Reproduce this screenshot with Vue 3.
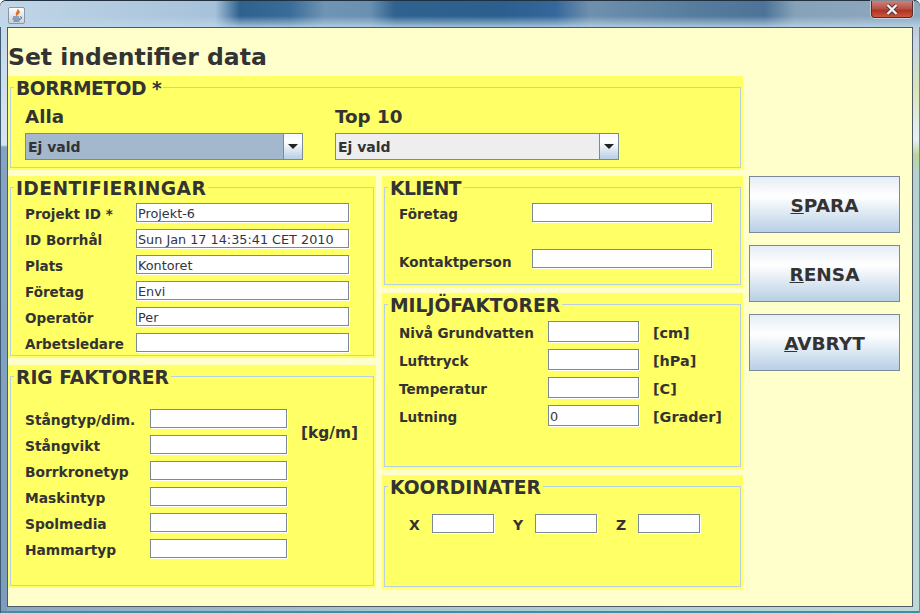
<template>
  <div class="window">
    <div class="titlebar">
      <div class="app-icon">
        <svg width="14" height="14" viewBox="0 0 14 14">
          <path d="M7.500 0.500C9.500 2.500 5 3.500 7 6.500C6.500 4.500 10.500 4 8.500 2" fill="none" stroke="#e8701a" stroke-width="1.600" />
          <path d="M3 8h6M2.500 10h7.500M3.500 12h6" stroke="#3a5c8c" stroke-width="1" fill="none" />
          <path d="M10 7.800c2.300-.5 2 2.200-.5 2.600" stroke="#3a5c8c" stroke-width="1" fill="none" />
        </svg>
      </div>
      <div class="close-btn">
        <svg width="16" height="13" viewBox="0 0 16 13">
          <path d="M3.500 2L12.500 11M12.500 2L3.500 11" stroke="#5b3030" stroke-width="4" />
          <path d="M3.500 2L12.500 11M12.500 2L3.500 11" stroke="#f2f3f5" stroke-width="2.400" />
        </svg>
      </div>
    </div>
    <div class="client">
      <h1 class="heading">Set indentifier data</h1>
      <div class="main">
        <div class="forms">
          <section class="panel method-panel">
            <div class="box">
              <h2 class="legend">BORRMETOD *</h2>
              <div class="method-grid">
                <div v-for="c in combos" :key="c.title" class="method" :class="c.cls">
                  <div class="method-title">{{ c.title }}</div>
                  <div class="combo">
                    <div class="combo-value">Ej vald</div>
                    <div class="combo-arrow"><span class="triangle"></span></div>
                  </div>
                </div>
              </div>
            </div>
          </section>

          <div class="columns">
            <div class="col left-col">
              <section class="panel ident-panel">
                <div class="box">
                  <h2 class="legend">IDENTIFIERINGAR</h2>
                  <div class="rows ident-rows">
                    <template v-for="f in identFields" :key="f.label">
                      <label>{{ f.label }}</label>
                      <input type="text" :value="f.value" readonly />
                    </template>
                  </div>
                </div>
              </section>
              <section class="panel rig-panel">
                <div class="box">
                  <h2 class="legend">RIG FAKTORER</h2>
                  <div class="rows rig-rows">
                    <span class="unit rig-unit">[kg/m]</span>
                    <template v-for="f in rigFields" :key="f">
                      <label>{{ f }}</label>
                      <input type="text" readonly />
                    </template>
                  </div>
                </div>
              </section>
            </div>

            <div class="col right-col">
              <section class="panel client-panel">
                <div class="box">
                  <h2 class="legend">KLIENT</h2>
                  <div class="rows client-rows">
                    <label>Företag</label>
                    <input type="text" readonly />
                    <label class="low">Kontaktperson</label>
                    <input type="text" readonly />
                  </div>
                </div>
              </section>
              <section class="panel env-panel">
                <div class="box">
                  <h2 class="legend">MILJÖFAKTORER</h2>
                  <div class="rows env-rows">
                    <template v-for="f in envFields" :key="f.label">
                      <label>{{ f.label }}</label>
                      <input type="text" :value="f.value" readonly />
                      <span class="unit">{{ f.unit }}</span>
                    </template>
                  </div>
                </div>
              </section>
              <section class="panel coord-panel">
                <div class="box">
                  <h2 class="legend">KOORDINATER</h2>
                  <div class="coords">
                    <template v-for="a in ['X', 'Y', 'Z']" :key="a">
                      <label>{{ a }}</label>
                      <input type="text" readonly />
                    </template>
                  </div>
                </div>
              </section>
            </div>
          </div>
        </div>

        <div class="actions">
          <button v-for="b in buttons" :key="b.rest" type="button"><u>{{ b.key }}</u>{{ b.rest }}</button>
        </div>
      </div>
    </div>
  </div>
</template>

<script setup>
const combos = [
  { title: 'Alla', cls: 'all' },
  { title: 'Top 10', cls: 'top' },
];

const identFields = [
  { label: 'Projekt ID *', value: 'Projekt-6' },
  { label: 'ID Borrhål', value: 'Sun Jan 17 14:35:41 CET 2010' },
  { label: 'Plats', value: 'Kontoret' },
  { label: 'Företag', value: 'Envi' },
  { label: 'Operatör', value: 'Per' },
  { label: 'Arbetsledare', value: '' },
];

const rigFields = ['Stångtyp/dim.', 'Stångvikt', 'Borrkronetyp', 'Maskintyp', 'Spolmedia', 'Hammartyp'];

const envFields = [
  { label: 'Nivå Grundvatten', value: '', unit: '[cm]' },
  { label: 'Lufttryck', value: '', unit: '[hPa]' },
  { label: 'Temperatur', value: '', unit: '[C]' },
  { label: 'Lutning', value: '0', unit: '[Grader]' },
];

const buttons = [
  { key: 'S', rest: 'PARA' },
  { key: 'R', rest: 'ENSA' },
  { key: 'A', rest: 'VBRYT' },
];
</script>

<style>
html,
body {
  margin: 0;
  overflow: hidden;
  background: #ffffff;
}
</style>

<style scoped>
.window {
  width: 920px;
  height: 613px;
  box-sizing: border-box;
  padding: 0 7px 6px 7px;
  display: flex;
  flex-direction: column;
  font-family: "DejaVu Sans", Verdana, sans-serif;
  color: #333333;
  border-radius: 6px 6px 0 0;
  background:
    linear-gradient(180deg, #c2d6e7 0, #d6e4ef 145px, #86a4c2 147px, #7e9dbc 100%) left top / 7px 100% no-repeat,
    linear-gradient(180deg, #a5b8a5 0, #c7d4e8 40px, #d9e4b8 90px, #e6f0f8 140px, #bcd59a 155px, #b5d2d2 175px, #bcd8d8 100%) right top / 7px 100% no-repeat,
    linear-gradient(90deg, #8aa6c2 0, #a5c4d0 40%, #bcd8d8 100%);
  box-shadow: inset 1px 0 0 #3f5a73, inset -1px 0 0 #19a9c9, inset 0 -2px 0 #3d8fa2;
}

.titlebar {
  height: 27px;
  flex: none;
  margin: 0 -7px;
  padding: 0 7px;
  display: flex;
  justify-content: space-between;
  align-items: flex-start;
  border-top: 1px solid #20303f;
  box-sizing: border-box;
  border-radius: 6px 6px 0 0;
  background:
    linear-gradient(180deg, rgba(190, 215, 235, 0) 0, rgba(190, 215, 235, 0) 15px, rgba(190, 215, 235, 0.8) 26px),
    linear-gradient(90deg, #c2d6e7 0, #b4cce0 100px, #a6c2da 215px, #2f618f 240px, #3a6c98 290px, #6f94b4 325px, #6a90b0 370px, #2f628f 395px, #2b5f8e 500px, #35679a 555px, #6f90ad 590px, #557b9d 700px, #4d7498 765px, #86a2b9 795px, #8fa9be 920px);
}

.app-icon {
  width: 15px;
  height: 15px;
  margin: 6px 0 0 1px;
  border: 1px solid #8a97a3;
  border-radius: 2px;
  background: linear-gradient(180deg, #fbfcfd, #c9d3dc);
  display: flex;
  align-items: center;
  justify-content: center;
}

.close-btn {
  width: 42px;
  height: 17px;
  margin: 0 0 0 0;
  box-sizing: border-box;
  border: 1px solid #5a2a28;
  border-top: none;
  border-radius: 0 0 4px 4px;
  background: linear-gradient(180deg, #cf8077 0, #b6564c 45%, #b23220 60%, #c9573f 100%);
  box-shadow: 0 0 0 1px rgba(255, 255, 255, 0.45);
  display: flex;
  align-items: center;
  justify-content: center;
}

.client {
  flex: 1;
  min-height: 0;
  border: 1px solid #4d5a63;
  background: #ffffcc;
}

.heading {
  margin: 0;
  height: 48px;
  box-sizing: border-box;
  padding-top: 15px;
  font-size: 23.5px;
  line-height: 28px;
  font-weight: 700;
  white-space: nowrap;
}

.main {
  display: flex;
  gap: 6px;
}

.forms {
  width: 735px;
  flex: none;
}

.columns {
  display: flex;
  gap: 6px;
  margin-top: 6px;
}

.col {
  display: flex;
  flex-direction: column;
  gap: 7px;
}

.left-col {
  width: 368px;
}

.right-col {
  width: 361px;
  gap: 6px;
}

.panel {
  background: #ffff66;
  padding: 11px 2px 2px;
  box-sizing: border-box;
}

.box {
  height: 100%;
  box-sizing: border-box;
  border: 1px solid #b8cfe5;
  padding: 0 0 0 14px;
}

.legend {
  margin: -10px 0 -2px -11px;
  padding: 0 2px;
  width: fit-content;
  background: #ffff66;
  font-size: 18.7px;
  line-height: 22px;
  font-weight: 700;
  white-space: nowrap;
}

.method-panel .legend {
  letter-spacing: -0.5px;
}

.ident-panel .legend {
  letter-spacing: 0.4px;
}

.client-panel .legend {
  letter-spacing: -0.6px;
}

.method-panel {
  height: 94px;
}

.method-grid {
  display: flex;
  gap: 32px;
}

.method-title {
  height: 24px;
  margin-top: 7px;
  font-size: 18.3px;
  line-height: 24px;
  font-weight: 700;
  margin-bottom: 4px;
}

.all .combo {
  width: 278px;
}

.top .combo {
  width: 284px;
}

.combo {
  height: 27px;
  box-sizing: border-box;
  display: flex;
  border: 1px solid #7a8a99;
  font-size: 14px;
  font-weight: 700;
}

.combo-value {
  flex: 1;
  padding-left: 2px;
  line-height: 26px;
  border-right: 1px solid #7a8a99;
}

.all .combo-value {
  background: #a3b8cc;
}

.top .combo-value {
  background: #eeeeee;
}

.combo-arrow {
  width: 18px;
  flex: none;
  background: linear-gradient(180deg, #f4f7fb 0, #ffffff 30%, #b8cfe5 100%);
  display: flex;
  align-items: center;
  justify-content: center;
}

.triangle {
  width: 0;
  height: 0;
  border-left: 5px solid transparent;
  border-right: 5px solid transparent;
  border-top: 5px solid #222222;
}

.rows {
  display: grid;
  align-items: center;
  font-size: 13.5px;
  font-weight: 700;
}

.rows label {
  padding-top: 2px;
  white-space: nowrap;
}

input {
  box-sizing: border-box;
  width: 100%;
  height: 19px;
  margin: 0;
  padding: 2px 2px 0 1px;
  border: 1px solid #7a8a99;
  border-radius: 0;
  box-shadow: 1px 1px 0 #ffffff;
  background: #ffffff;
  color: #333344;
  font-family: "DejaVu Sans", Verdana, sans-serif;
  font-size: 12.8px;
  outline: none;
}

.ident-panel {
  height: 182px;
}

.ident-rows {
  grid-template-columns: 111px 213px;
  grid-auto-rows: 19px;
  row-gap: 7px;
  margin-top: 5px;
}

.rig-panel {
  height: 223px;
}

.rig-rows {
  grid-template-columns: 125px 137px auto;
  grid-auto-rows: 19px;
  row-gap: 7px;
  margin-top: 22px;
  font-size: 13.8px;
}

.rig-rows label {
  grid-column: 1;
}

.rig-rows input {
  grid-column: 2;
}

.unit {
  white-space: nowrap;
  padding-top: 2px;
}

.rig-unit {
  grid-column: 3;
  grid-row: 1 / span 2;
  margin-left: 14px;
  font-size: 15.4px;
}

.client-panel {
  height: 111px;
}

.client-rows {
  grid-template-columns: 133px 180px;
  grid-auto-rows: 19px;
  row-gap: 27px;
  margin-top: 5px;
}

.client-rows .low {
  padding-top: 7px;
}

.env-panel {
  height: 176px;
}

.env-rows {
  grid-template-columns: 149px 91px auto;
  grid-auto-rows: 21px;
  row-gap: 7px;
  margin-top: 6px;
}

.env-rows .unit {
  margin-left: 14px;
  font-size: 14.4px;
}

.env-rows input {
  height: 21px;
}

.coord-panel {
  height: 114px;
}

.coords {
  display: grid;
  grid-template-columns: 33px 62px 41px 62px 41px 62px;
  align-items: center;
  justify-items: start;
  margin-top: 17px;
  font-size: 14px;
  font-weight: 700;
}

.coords label {
  padding: 2px 0 0 19px;
}

.coords label:first-child {
  padding-left: 10px;
}

.actions {
  width: 151px;
  flex: none;
  display: flex;
  flex-direction: column;
  gap: 12px;
  margin-top: 100px;
}

.actions button {
  height: 57px;
  padding: 2px 0 0;
  border: 1px solid #7a8a99;
  background: linear-gradient(180deg, #e6edf5 0, #ffffff 35%, #b8cfe5 100%);
  color: #333333;
  font-family: "DejaVu Sans", Verdana, sans-serif;
  font-size: 18.5px;
  font-weight: 700;
}
</style>
